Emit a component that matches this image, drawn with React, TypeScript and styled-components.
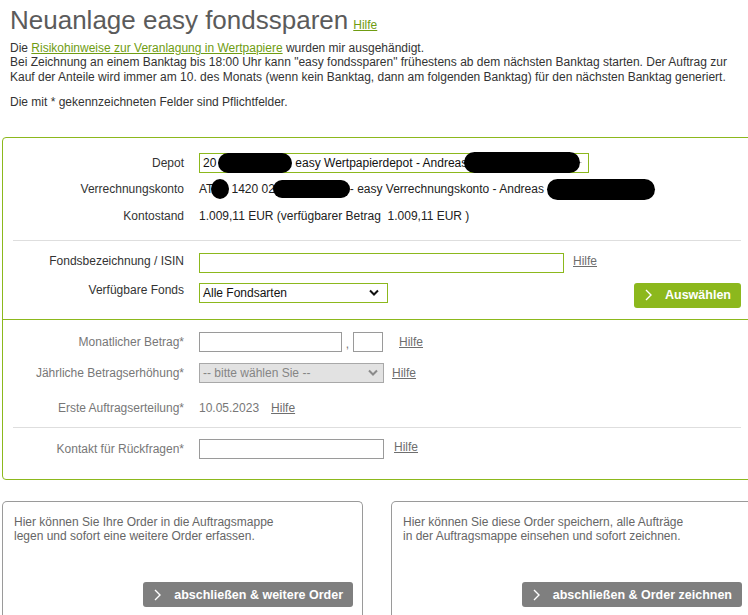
import React from "react";
import styled, { createGlobalStyle } from "styled-components";

const GREEN = "#8cb81d";

const Global = createGlobalStyle`
  html, body { margin: 0; padding: 0; background: #fff; }
  body {
    font-family: "Liberation Sans", Arial, sans-serif;
    font-size: 12px;
    color: #333;
    overflow: hidden;
  }
  * { box-sizing: border-box; }
`;

const Page = styled.div`
  width: 748px;
  overflow: hidden;
  padding-bottom: 40px;
`;

const Header = styled.header`
  padding: 0 10px;
`;

const TitleRow = styled.div`
  display: flex;
  align-items: baseline;
  gap: 5px;
  margin-top: 5px;
`;

const Title = styled.h1`
  margin: 0;
  font-size: 26px;
  line-height: 30px;
  font-weight: normal;
  color: #5b5b5b;
`;

const Link = styled.a<{ $tone?: "green" | "gray" }>`
  color: ${(p) => (p.$tone === "gray" ? "#6e6e6e" : "#6f9c12")};
  text-decoration: underline;
  cursor: pointer;
  font-size: 12px;
  white-space: nowrap;
`;

const Para = styled.p<{ $gap: number }>`
  margin: ${(p) => p.$gap}px 0 0;
  line-height: 14.4px;
  color: #333;
`;

const FormBox = styled.div`
  margin: 27px 0 0 2px;
  width: 750px;
  border: 1px solid ${GREEN};
  border-radius: 4px;
`;

const Section = styled.section<{ $top: number; $bottom: number; $gap: number; $divider?: boolean }>`
  display: flex;
  flex-direction: column;
  gap: ${(p) => p.$gap}px;
  padding: ${(p) => p.$top}px 0 ${(p) => p.$bottom}px;
  border-top: ${(p) => (p.$divider ? `1px solid ${GREEN}` : "none")};
`;

const Divider = styled.hr<{ $mt?: number }>`
  margin: ${(p) => p.$mt ?? 0}px 10px 0;
  border: none;
  border-top: 1px solid #dedede;
  height: 0;
`;

const Row = styled.div<{ $align?: string; $mt?: number }>`
  display: flex;
  align-items: ${(p) => p.$align || "center"};
  min-height: 20px;
  margin-top: ${(p) => p.$mt ?? 0}px;
`;

const Label = styled.div<{ $muted?: boolean; $raise?: number }>`
  width: 181px;
  margin-right: 15px;
  flex-shrink: 0;
  text-align: right;
  line-height: 14px;
  color: ${(p) => (p.$muted ? "#777" : "#333")};
  margin-top: ${(p) => (p.$raise ? -p.$raise * 2 : 0)}px;
`;

const Value = styled.div<{ $muted?: boolean }>`
  display: flex;
  align-items: center;
  white-space: nowrap;
  line-height: 14px;
  color: ${(p) => (p.$muted ? "#777" : "#222")};
`;

const TextInput = styled.input<{ $w: number; $gray?: boolean }>`
  width: ${(p) => p.$w}px;
  height: 20px;
  border: 1px solid ${(p) => (p.$gray ? "#9a9a9a" : GREEN)};
  border-radius: 0;
  padding: 0 2px;
  font: inherit;
  outline: none;
  background: #fff;
`;

const SelectBox = styled.div<{ $w: number; $gray?: boolean; $disabled?: boolean; $pr?: number }>`
  width: ${(p) => p.$w}px;
  height: 20px;
  display: flex;
  align-items: center;
  justify-content: space-between;
  padding: 0 ${(p) => p.$pr ?? 8}px 0 3px;
  border: 1px solid ${(p) => (p.$gray ? "#a8a8a8" : GREEN)};
  background: ${(p) => (p.$disabled ? "#e2e2e2" : "#fff")};
  color: ${(p) => (p.$disabled ? "#858585" : "#111")};
  white-space: nowrap;
  font-size: 12px;
`;

const SelectText = styled.span`
  display: flex;
  align-items: center;
`;

const Redact = styled.span<{ $w: number; $h: number; $ml?: number; $round?: boolean }>`
  display: inline-block;
  width: ${(p) => p.$w}px;
  height: ${(p) => p.$h}px;
  margin-left: ${(p) => p.$ml ?? 0}px;
  background: #000;
  border-radius: ${(p) => (p.$round ? "50%" : `${p.$h / 2}px`)};
  flex-shrink: 0;
`;

const Gap = styled.span<{ $w: number }>`
  display: inline-block;
  width: ${(p) => p.$w}px;
  flex-shrink: 0;
`;

const HelpWrap = styled.span<{ $ml: number; $raise?: number }>`
  margin-left: ${(p) => p.$ml}px;
  margin-top: ${(p) => (p.$raise ? -p.$raise * 2 : 0)}px;
  line-height: 14px;
`;

const Spacer = styled.div`
  flex: 1;
`;

const Comma = styled.span`
  width: 11px;
  text-align: center;
  color: #777;
  align-self: flex-end;
  line-height: 16px;
`;

const Button = styled.button<{ $tone: "green" | "gray"; $mr?: number }>`
  display: inline-flex;
  align-items: center;
  gap: 13px;
  height: 25px;
  padding: 0 10px 0 11px;
  margin-right: ${(p) => p.$mr ?? 0}px;
  border: none;
  border-radius: 3px;
  background: ${(p) => (p.$tone === "green" ? GREEN : "#7f7f7f")};
  color: #fff;
  font-family: "Liberation Sans", Arial, sans-serif;
  font-weight: bold;
  font-size: 12.5px;
  cursor: pointer;
  white-space: nowrap;
`;

const Cards = styled.div`
  display: flex;
  gap: 28px;
  margin: 21px 0 0 2px;
`;

const Card = styled.div`
  flex: 0 0 361px;
  width: 361px;
  height: 140px;
  border: 1px solid #9a9a9a;
  border-bottom: none;
  border-radius: 5px 5px 0 0;
  padding: 13px 9px 0 11px;
  display: flex;
  flex-direction: column;
`;

const CardText = styled.p`
  margin: 0;
  line-height: 14.4px;
  color: #666;
`;

const CardAction = styled.div`
  margin-top: 39px;
  display: flex;
  justify-content: flex-end;
`;

const Chevron = () => (
  <svg width="7" height="12" viewBox="0 0 7 12" aria-hidden>
    <polyline points="1,1 6,6 1,11" fill="none" stroke="#fff" strokeWidth="1.4" />
  </svg>
);

const Down = ({ color = "#111" }: { color?: string }) => (
  <svg width="10" height="7" viewBox="0 0 10 7" aria-hidden>
    <polyline points="1,1.5 5,5.5 9,1.5" fill="none" stroke={color} strokeWidth="2" />
  </svg>
);

const Help = ({ ml, raise, tone = "gray" }: { ml: number; raise?: number; tone?: "green" | "gray" }) => (
  <HelpWrap $ml={ml} $raise={raise}>
    <Link $tone={tone}>Hilfe</Link>
  </HelpWrap>
);

export default function App() {
  return (
    <Page>
      <Global />
      <Header>
        <TitleRow>
          <Title>Neuanlage easy fondssparen</Title>
          <Link>Hilfe</Link>
        </TitleRow>
        <Para $gap={6}>
          Die <Link>Risikohinweise zur Veranlagung in Wertpapiere</Link> wurden mir ausgehändigt.
          <br />
          Bei Zeichnung an einem Banktag bis 18:00 Uhr kann "easy fondssparen" frühestens ab dem nächsten Banktag starten. Der Auftrag zur
          Kauf der Anteile wird immer am 10. des Monats (wenn kein Banktag, dann am folgenden Banktag) für den nächsten Banktag generiert.
        </Para>
        <Para $gap={11}>Die mit * gekennzeichneten Felder sind Pflichtfelder.</Para>
      </Header>

      <FormBox>
        <Section $top={15} $bottom={14} $gap={6}>
          <Row>
            <Label>Depot</Label>
            <SelectBox $w={390} $pr={6}>
              <SelectText>
                20
                <Redact $w={74} $h={20} $ml={2} />
                <Gap $w={3} />
                easy Wertpapierdepot - Andreas
                <Redact $w={116} $h={21} $ml={-3} />
              </SelectText>
              <Down />
            </SelectBox>
          </Row>
          <Row>
            <Label>Verrechnungskonto</Label>
            <Value>
              AT
              <Redact $w={18} $h={20} $ml={-2} $round />
              <Gap $w={2} />
              1420 02
              <Redact $w={77} $h={18} $ml={-2} />
              - easy Verrechnungskonto - Andreas
              <Redact $w={108} $h={21} $ml={3} />
            </Value>
          </Row>
          <Row>
            <Label>Kontostand</Label>
            <Value>1.009,11 EUR (verfügbarer Betrag&nbsp;&nbsp;1.009,11 EUR )</Value>
          </Row>
        </Section>
        <Divider />
        <Section $top={12} $bottom={11} $gap={10}>
          <Row>
            <Label $raise={2}>Fondsbezeichnung / ISIN</Label>
            <TextInput $w={365} />
            <Help ml={9} raise={2} />
          </Row>
          <Row $align="flex-start">
            <Label>Verfügbare Fonds</Label>
            <SelectBox $w={189} $pr={8}>
              <span>Alle Fondsarten</span>
              <Down />
            </SelectBox>
            <Spacer />
            <Button $tone="green" $mr={10}>
              <Chevron />
              Auswählen
            </Button>
          </Row>
        </Section>
        <Section $top={12} $bottom={20} $gap={11} $divider>
          <Row>
            <Label $muted>Monatlicher Betrag*</Label>
            <TextInput $w={143} $gray />
            <Comma>,</Comma>
            <TextInput $w={30} $gray />
            <Help ml={16} />
          </Row>
          <Row>
            <Label $muted>Jährliche Betragserhöhung*</Label>
            <SelectBox $w={185} $gray $disabled $pr={5}>
              <span>-- bitte wählen Sie --</span>
              <Down color="#8a8a8a" />
            </SelectBox>
            <Help ml={8} />
          </Row>
          <Row $mt={4}>
            <Label $muted>Erste Auftragserteilung*</Label>
            <Value $muted>10.05.2023</Value>
            <Help ml={12} />
          </Row>
          <Divider $mt={-2} />
          <Row>
            <Label $muted>Kontakt für Rückfragen*</Label>
            <TextInput $w={185} $gray />
            <Help ml={10} raise={2} />
          </Row>
        </Section>
      </FormBox>

      <Cards>
        <Card>
          <CardText>
            Hier können Sie Ihre Order in die Auftragsmappe
            <br />
            legen und sofort eine weitere Order erfassen.
          </CardText>
          <CardAction>
            <Button $tone="gray">
              <Chevron />
              abschließen &amp; weitere Order
            </Button>
          </CardAction>
        </Card>
        <Card>
          <CardText>
            Hier können Sie diese Order speichern, alle Aufträge
            <br />
            in der Auftragsmappe einsehen und sofort zeichnen.
          </CardText>
          <CardAction>
            <Button $tone="gray">
              <Chevron />
              abschließen &amp; Order zeichnen
            </Button>
          </CardAction>
        </Card>
      </Cards>
    </Page>
  );
}
